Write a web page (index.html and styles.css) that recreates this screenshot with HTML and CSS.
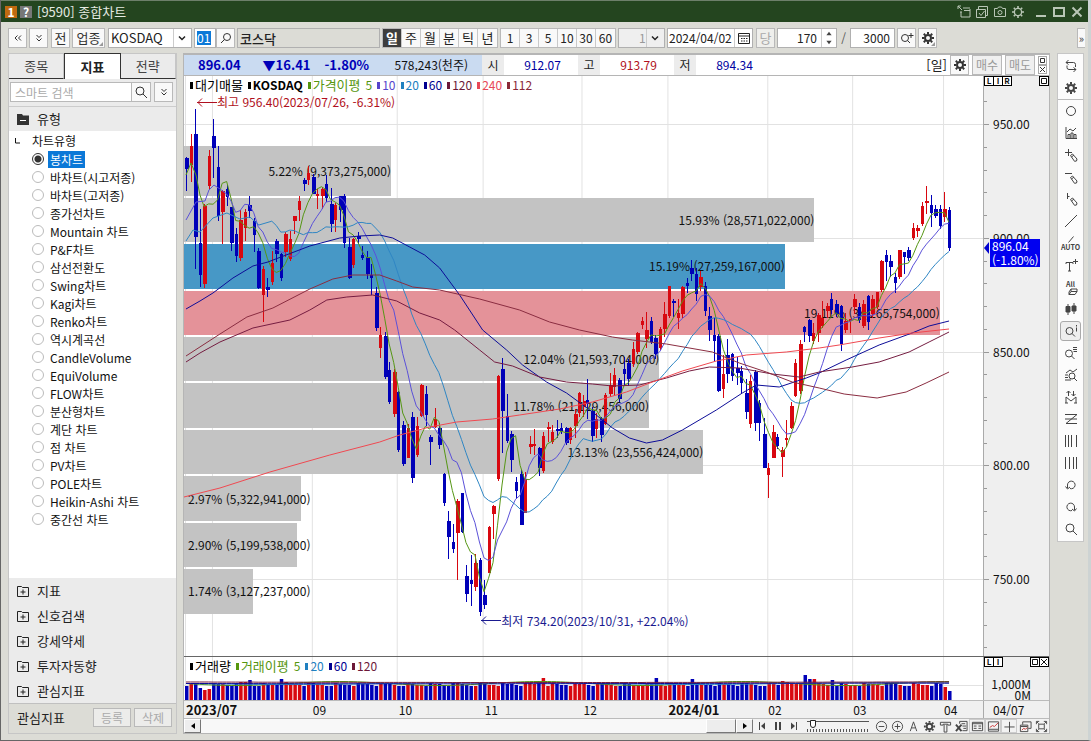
FILE: index.html
```html
<!DOCTYPE html>
<html lang="ko">
<head>
<meta charset="utf-8">
<title>[9590] 종합차트</title>
<link rel="stylesheet" href="styles.css">
</head>
<body>
<svg class="defs" aria-hidden="true">
  <symbol id="gear" viewBox="0 0 14 14"><circle cx="7" cy="7" r="3" fill="none" stroke="currentColor" stroke-width="2"/><path d="M7 1v2M7 11v2M1 7h2M11 7h2M2.8 2.8l1.4 1.4M9.8 9.8l1.4 1.4M11.2 2.8L9.8 4.2M4.2 9.8l-1.4 1.4" stroke="currentColor" stroke-width="2"/></symbol>
  <symbol id="gear-thin" viewBox="0 0 14 14"><circle cx="7" cy="7" r="3.6" fill="none" stroke="currentColor" stroke-width="1.3"/><path d="M7 1v2M7 11v2M1 7h2M11 7h2M2.8 2.8l1.4 1.4M9.8 9.8l1.4 1.4M11.2 2.8L9.8 4.2M4.2 9.8l-1.4 1.4" stroke="currentColor" stroke-width="1.6"/></symbol>
  <symbol id="lens" viewBox="0 0 14 14"><circle cx="6" cy="6" r="4" fill="none" stroke="currentColor"/><path d="M9 9l4 4" stroke="currentColor"/></symbol>
  <symbol id="lens-left" viewBox="0 0 14 14"><circle cx="8" cy="6" r="3.5" fill="none" stroke="currentColor"/><path d="M5.500 8.500L2 12" stroke="currentColor"/></symbol>
  <symbol id="chev" viewBox="0 0 10 10"><path d="M2 3.500l3 3 3-3" fill="none" stroke="currentColor" stroke-width="1.5"/></symbol>
  <symbol id="chev2" viewBox="0 0 10 10"><path d="M2.500 2l2.500 2.500L7.500 2M2.500 5.500L5 8l2.500-2.500" fill="none" stroke="currentColor"/></symbol>
  <symbol id="folder-plus" viewBox="0 0 12 12"><path d="M.5 1.500h4l1 1h6v9H.5zM6 4.500v5M3.500 7h5" fill="none" stroke="currentColor"/></symbol>
  <symbol id="pencil" viewBox="0 0 14 14"><path d="M6.500 7.500l2-1.500 4.500 5-.5 2-2 .3zM7.500 9l2.500-2" fill="none" stroke="currentColor"/></symbol>
</svg>

<div class="window">
<header class="title">
  <span class="badge badge-one">1</span><span class="badge badge-help">?</span>
  <h1>[9590] 종합차트</h1>
  <div class="title-tools">
    <button aria-label="분리"><svg viewBox="0 0 14 14"><path d="M1 1l4 4M1 4V1h3M6 3h7M4 7v5h9V4M4 8V6M7 5.500h6" /></svg></button>
    <button aria-label="복사"><svg viewBox="0 0 14 14"><path d="M1.500 4.500h9v8h-9zM3.500 4V1.500h9v9H11M4 8l2 2.500L9.500 6"/></svg></button>
    <button aria-label="캡처"><svg viewBox="0 0 14 14"><path d="M1.500 3.500h3l1-1.500h3l1 1.500h3v8h-11z"/><circle cx="7" cy="7.500" r="2"/></svg></button>
    <button aria-label="설정"><svg viewBox="0 0 14 14"><use href="#gear-thin"/></svg></button>
    <button class="first-win" aria-label="최소화"><svg viewBox="0 0 14 14"><path class="thick" d="M2 11h10"/></svg></button>
    <button aria-label="최대화"><svg viewBox="0 0 14 14"><path class="thick" d="M2 3h10v8H2z"/></svg></button>
    <button aria-label="닫기"><svg viewBox="0 0 14 14"><path class="thick" d="M2.500 2.500l9 9M11.500 2.500l-9 9"/></svg></button>
  </div>
</header>

<div class="toolbar">
  <button class="btn" aria-label="접기"><svg class="i10" viewBox="0 0 10 10"><path d="M4.500 2.500L2 5l2.500 2.500M8 2.500L5.500 5 8 7.500" fill="none" stroke="currentColor"/></svg></button>
  <button class="btn" aria-label="펼치기"><svg class="i10"><use href="#chev2"/></svg></button>
  <button class="btn lead">전</button>
  <button class="btn wide corner">업종</button>
  <span class="pick market"><select aria-label="시장"><option>KOSDAQ</option></select><svg class="i10"><use href="#chev"/></svg></span>
  <span class="code"><input aria-label="종목코드" value="01"></span>
  <button class="btn join" aria-label="종목검색"><svg class="i14"><use href="#lens-left"/></svg></button>
  <input class="field name" aria-label="종목명" value="코스닥" readonly>
  <div class="group" role="group" aria-label="주기">
    <button class="on">일</button><button>주</button><button>월</button><button>분</button><button>틱</button><button>년</button>
  </div>
  <div class="group nums" role="group" aria-label="간격">
    <button>1</button><button>3</button><button>5</button><button>10</button><button>30</button><button>60</button>
  </div>
  <span class="pick step"><select aria-label="분 간격" disabled><option>1</option></select><svg class="i10"><use href="#chev"/></svg></span>
  <span class="date"><input aria-label="조회일" value="2024/04/02"><button aria-label="달력"><svg class="i14" viewBox="0 0 14 14"><path d="M1.500 2.500h11v10h-11zM2 5h10" fill="none" stroke="currentColor"/><path d="M4 7.500h7M4 10h7" stroke="currentColor" stroke-dasharray="1.500 1"/></svg></button></span>
  <button class="btn dim">당</button>
  <span class="spin"><input aria-label="표시 개수" value="170"><span class="spin-btns"><button aria-label="증가"><svg viewBox="0 0 8 8"><path d="M1 6l3-4 3 4z"/></svg></button><button aria-label="감소"><svg viewBox="0 0 8 8"><path d="M1 2l3 4 3-4z"/></svg></button></span></span>
  <span class="slash">/</span>
  <span class="spin"><input aria-label="전체 개수" value="3000"></span>
  <button class="btn" aria-label="조회 추가"><svg class="i14" viewBox="0 0 14 14"><circle cx="5" cy="7" r="3.500" fill="none" stroke="currentColor"/><path d="M7.500 9.500L10 12M11 2v5M8.500 4.500h5" stroke="currentColor"/></svg></button>
  <button class="btn corner" aria-label="설정"><svg class="i14"><use href="#gear"/></svg></button>
  <button class="btn more" aria-label="더보기">»</button>
</div>

<div class="body">
<aside class="side">
  <div class="tabs" role="tablist"><button role="tab">종목</button><button role="tab" class="active" aria-selected="true">지표</button><button role="tab">전략</button></div>
  <div class="search"><input placeholder="스마트 검색" aria-label="스마트 검색"><button class="btn join" aria-label="검색"><svg class="i14"><use href="#lens"/></svg></button><button class="btn" aria-label="펼치기"><svg class="i10"><use href="#chev2"/></svg></button></div>
  <h2 class="section"><svg class="i12" viewBox="0 0 12 12"><path d="M0 1h5l1 1.500h6V12H0z" fill="#333"/><path d="M3 7.500h6" stroke="#fff"/></svg>유형</h2>
  <fieldset class="tree">
    <legend><svg class="i10" viewBox="0 0 10 10"><path d="M2.500 2v5H7" fill="none" stroke="currentColor"/></svg>차트유형</legend>
    <label><input type="radio" name="t" checked><span>봉차트</span></label>
    <label><input type="radio" name="t"><span>바차트(시고저종)</span></label>
    <label><input type="radio" name="t"><span>바차트(고저종)</span></label>
    <label><input type="radio" name="t"><span>종가선차트</span></label>
    <label><input type="radio" name="t"><span>Mountain 차트</span></label>
    <label><input type="radio" name="t"><span>P&amp;F차트</span></label>
    <label><input type="radio" name="t"><span>삼선전환도</span></label>
    <label><input type="radio" name="t"><span>Swing차트</span></label>
    <label><input type="radio" name="t"><span>Kagi차트</span></label>
    <label><input type="radio" name="t"><span>Renko차트</span></label>
    <label><input type="radio" name="t"><span>역시계곡선</span></label>
    <label><input type="radio" name="t"><span>CandleVolume</span></label>
    <label><input type="radio" name="t"><span>EquiVolume</span></label>
    <label><input type="radio" name="t"><span>FLOW차트</span></label>
    <label><input type="radio" name="t"><span>분산형차트</span></label>
    <label><input type="radio" name="t"><span>계단 차트</span></label>
    <label><input type="radio" name="t"><span>점 차트</span></label>
    <label><input type="radio" name="t"><span>PV차트</span></label>
    <label><input type="radio" name="t"><span>POLE차트</span></label>
    <label><input type="radio" name="t"><span>Heikin-Ashi 차트</span></label>
    <label><input type="radio" name="t"><span>중간선 차트</span></label>
  </fieldset>
  <div class="folders">
    <button><svg class="i12"><use href="#folder-plus"/></svg>지표</button>
    <button><svg class="i12"><use href="#folder-plus"/></svg>신호검색</button>
    <button><svg class="i12"><use href="#folder-plus"/></svg>강세약세</button>
    <button><svg class="i12"><use href="#folder-plus"/></svg>투자자동향</button>
    <button><svg class="i12"><use href="#folder-plus"/></svg>관심지표</button>
  </div>
  <div class="side-foot"><span>관심지표</span><button disabled>등록</button><button disabled>삭제</button></div>
</aside>

<main class="chart">
  <div class="quote">
    <div class="now"><b>896.04</b><b class="chg">▼16.41</b><b class="rate">-1.80%</b><span>578,243(천주)</span></div>
    <span class="k">시</span><span class="v">912.07</span>
    <span class="k">고</span><span class="v up">913.79</span>
    <span class="k">저</span><span class="v">894.34</span>
    <span class="unit">[일]</span>
    <button class="btn" aria-label="설정"><svg class="i14"><use href="#gear"/></svg></button>
    <button class="btn trade">매수</button>
    <button class="btn trade">매도</button>
    <span class="mini"><button aria-label="확대"><svg viewBox="0 0 9 9"><path d="M2.500 2.500h4v4h-4z"/></svg></button><button aria-label="닫기"><svg viewBox="0 0 9 9"><path d="M2 2l5 5M7 2L2 7"/></svg></button></span>
  </div>

  <section class="pane price">
    <div class="plot">
      <svg id="grid" class="layer" viewBox="184 76 800 580" preserveAspectRatio="none"></svg>
      <div class="profile">
        <div class="bar" style="width:25.900%">5.22% (9,373,275,000)</div>
        <div class="bar" style="width:78.900%">15.93% (28,571,022,000)</div>
        <div class="bar blue" style="width:75.200%">15.19% (27,259,167,000)</div>
        <div class="bar pink" style="width:94.600%">19.11% (34,265,754,000)</div>
        <div class="bar" style="width:59.500%">12.04% (21,593,704,000)</div>
        <div class="bar" style="width:58.200%">11.78% (21,129,456,000)</div>
        <div class="bar" style="width:65%">13.13% (23,556,424,000)</div>
        <div class="bar short" style="width:14.600%">2.97% (5,322,941,000)</div>
        <div class="bar short" style="width:14.200%">2.90% (5,199,538,000)</div>
        <div class="bar short" style="width:8.600%">1.74% (3,127,237,000)</div>
      </div>
      <svg id="series" class="layer crisp" viewBox="184 76 800 580" preserveAspectRatio="none"></svg>
      <div class="legend">
        <span class="ko c-black">대기매물</span><b class="c-black">KOSDAQ</b><span class="ko c-green">가격이평</span><span class="c-green bare">5</span><span class="c-violet">10</span><span class="c-sky">20</span><span class="c-navy">60</span><span class="c-wine">120</span><span class="c-red">240</span><span class="c-brown">112</span>
      </div>
      <p class="note high"><svg viewBox="0 0 20 9"><path d="M0 4.500h20M5 .5l-4 4 4 4"/></svg>최고 956.40(2023/07/26, -6.31%)</p>
      <p class="note low"><svg viewBox="0 0 20 9"><path d="M0 4.500h20M5 .5l-4 4 4 4"/></svg>최저 734.20(2023/10/31, +22.04%)</p>
    </div>
    <div class="axis">
      <svg id="ticks" class="ticks" viewBox="0 76 6 580" preserveAspectRatio="none"></svg>
      <div class="scale"><span>950.00</span><span>900.00</span><span>850.00</span><span>800.00</span><span>750.00</span></div>
      <div class="tag">896.04<br>(-1.80%)</div>
      <div class="lir"><button>L</button><button>I</button><button>R</button><button class="end" aria-label="확대"><svg viewBox="0 0 8 8"><path d="M1.500 1.500h5v5h-5z"/></svg></button></div>
    </div>
  </section>

  <section class="pane volume">
    <div class="plot">
      <svg id="vol" class="layer" viewBox="184 657 800 43" preserveAspectRatio="none"></svg>
      <div class="legend">
        <span class="ko c-black">거래량</span><span class="ko c-green">거래이평</span><span class="c-green bare">5</span><span class="c-sky">20</span><span class="c-navy">60</span><span class="c-wine">120</span>
      </div>
    </div>
    <div class="axis">
      <div class="lir"><button>L</button><button>I</button><button class="end" aria-label="확대"><svg viewBox="0 0 8 8"><path d="M1.500 1.500h5v5h-5z"/></svg></button><button aria-label="닫기"><svg viewBox="0 0 8 8"><path d="M1 1l6 6M7 1L1 7"/></svg></button></div>
      <div class="vscale"><span>1,000M</span><span>0M</span></div>
    </div>
  </section>

  <div class="dates">
    <div class="months"><b>2023/07</b><span>09</span><span>10</span><span>11</span><span>12</span><b>2024/01</b><span>02</span><span>03</span><span>04</span></div>
    <span class="last">04/07</span>
  </div>

  <div class="controls">
    <button class="sb" aria-label="왼쪽"><svg viewBox="0 0 8 8"><path d="M6 1L2 4l4 3z"/></svg></button>
    <div class="track"><div class="thumb"></div></div>
    <button class="sb" aria-label="오른쪽"><svg viewBox="0 0 8 8"><path d="M2 1l4 3-4 3z"/></svg></button>
    <div class="play">
      <button aria-label="처음"><svg viewBox="0 0 10 10"><path d="M2.500 1v8" stroke="#444"/><path d="M8 1.500v7L4 5z" fill="#444"/></svg></button>
      <button aria-label="일시정지"><svg viewBox="0 0 10 10"><path d="M3 1v8M7 1v8" stroke="#444" stroke-width="2"/></svg></button>
      <button aria-label="끝"><svg viewBox="0 0 10 10"><path d="M7.500 1v8" stroke="#444"/><path d="M2 1.500v7L6 5z" fill="#444"/></svg></button>
    </div>
    <input class="speed" type="range" aria-label="속도" min="0" max="20" value="1">
    <div class="tools">
      <button aria-label="축소"><svg viewBox="0 0 14 14"><circle cx="7" cy="7" r="5.500"/><path d="M4 7h6"/></svg></button>
      <button aria-label="확대"><svg viewBox="0 0 14 14"><circle cx="7" cy="7" r="5.500"/><path d="M4 7h6M7 4v6"/></svg></button>
      <button aria-label="글자"><svg viewBox="0 0 14 14"><path d="M3.500 12L7 2l3.500 10M5 8.500h4"/></svg></button>
      <button aria-label="설정"><svg viewBox="0 0 14 14"><use href="#gear"/></svg></button>
      <button aria-label="도구"><svg viewBox="0 0 14 14"><path d="M1.500 5.500v-3h11v3h-3v-1h-5v1zM5.500 5v8h3V5"/></svg></button>
      <button aria-label="엑셀"><svg viewBox="0 0 14 14"><path d="M5 4V1.500h8v10H8M7 4h4M8 6.500h4M9 9h3"/><path class="thick" d="M1 5l6 7M7 5l-6 7"/></svg></button>
      <button class="boxed" aria-label="표"><svg viewBox="0 0 14 14"><path d="M1.500 2.500h11v9h-11zM1.500 4h11M3 6.500h3M3 9h3M8 6.500h3M8 9h3"/></svg></button>
      <button class="boxed" aria-label="차트"><svg viewBox="0 0 14 14"><path d="M1.500 2v10h11V2zM2 10h10"/><path d="M3 8l3-2 2 1 4-4" stroke="#c33"/></svg></button>
      <button class="boxed" aria-label="십자선"><svg viewBox="0 0 14 14"><path d="M7 2v11M1.500 7.500h11"/></svg></button>
      <button aria-label="겹치기"><svg viewBox="0 0 14 14"><path d="M1.500 5.500h8v7h-8zM4 5V2h9v7h-3M2 7h7"/><path d="M3 11l2-2 2 1 2-2" stroke="#c33"/></svg></button>
      <button aria-label="전체"><svg viewBox="0 0 14 14"><path d="M1.500 4.500v-3h3M9.500 1.500h3v3M12.500 9.500v3h-3M4.500 12.500h-3v-3M4 4.500h6v5H4zM2 2l2 2M12 2l-2 2M2 12l2-2M12 12l-2-2"/></svg></button>
    </div>
  </div>
</main>

<nav class="rail" aria-label="그리기 도구">
  <button aria-label="새로고침"><svg viewBox="0 0 14 14"><path d="M4.500 1L2 3.500l2.500 2M2 3.500h7.500a2 2 0 0 1 2 2V8M9.500 13l2.500-2.500L9.500 8.500M12 10.500H5a2 2 0 0 1-2-2V6.500"/></svg></button>
  <button aria-label="설정"><svg viewBox="0 0 14 14"><use href="#gear"/></svg></button>
  <hr>
  <button aria-label="원"><svg viewBox="0 0 14 14"><circle cx="7" cy="7" r="4.500"/></svg></button>
  <button aria-label="차트"><svg viewBox="0 0 14 14"><path d="M2 1v11.500h11M4 12V8.500h2V12M7 12V7h2v5M10 12V8.500h2V12M3 6l3-3 3 2 3-3"/></svg></button>
  <button aria-label="추가"><svg viewBox="0 0 14 14"><path d="M4.500 1v7M1 4.500h7"/><use href="#pencil"/></svg></button>
  <button aria-label="수평선"><svg viewBox="0 0 14 14"><path d="M1 3.500h7"/><use href="#pencil"/></svg></button>
  <button aria-label="수직선"><svg viewBox="0 0 14 14"><path d="M3.500 1v6M3.500 4.500h2"/><use href="#pencil"/></svg></button>
  <button aria-label="추세선"><svg viewBox="0 0 14 14"><path d="M1 13L13 1"/></svg></button>
  <button class="txt"><svg viewBox="0 0 14 7"><path d="M4.500 6.500l5-6"/></svg>AUTO</button>
  <button aria-label="글자"><svg viewBox="0 0 14 14"><path d="M2 6V4.500h7V6M5.500 4.500V13M4 13h3M11.500 1v5M9 3.500h5"/></svg></button>
  <button class="txt all">All<svg viewBox="0 0 14 7"><path d="M5 6.500l2-3h6l-2 3zM7 3.500V1l6 0v2.500M5 6.500V4l2-3"/></svg></button>
  <button aria-label="봉"><svg viewBox="0 0 14 14"><path d="M4 2v11M10 1v11"/><path d="M2 4.500h4V10H2zM8 4h4v5H8z" fill="#444"/></svg></button>
  <button class="sel" aria-label="정보"><svg viewBox="0 0 14 14"><circle cx="5.500" cy="7" r="3.500"/><path d="M8 9.500l3 3M12.500 3.500v4M12.500 1v1.500"/></svg></button>
  <button aria-label="목록"><svg viewBox="0 0 14 14"><circle cx="5" cy="7.500" r="3.500"/><path d="M7.500 10l3 3M9 1.500h4M9 3.500h4M9.500 5.500H13"/></svg></button>
  <button aria-label="분석"><svg viewBox="0 0 14 14"><circle cx="8" cy="8" r="3"/><path d="M10 10l3 3M2 5l4-3 3 2 4-3M1 7h3M1 9.500h3M1 12h6"/></svg></button>
  <button aria-label="패턴"><svg viewBox="0 0 14 14"><path d="M2 13V7l5 4 5-4v6M4.500 1v5M2.500 3l2-2 2 2M9.500 1v5M7.500 4l2 2 2-2M1 13h3M10 13h3"/></svg></button>
  <button aria-label="지그재그"><svg viewBox="0 0 14 14"><path d="M1 2.500h12L2 11.500h11M1 7h12"/></svg></button>
  <button aria-label="세로선"><svg viewBox="0 0 14 14"><path d="M1.500 1v12M4.500 1v12M7.500 1v12M12.500 1v12"/></svg></button>
  <button aria-label="등간격"><svg viewBox="0 0 14 14"><path d="M1.500 1v12M5.500 1v12M9.500 1v12M12.500 1v12"/></svg></button>
  <button aria-label="되돌리기"><svg viewBox="0 0 14 14"><path d="M6 10.500A3.800 3.800 0 1 0 3.500 7v3M1.500 8.500l2 2.500 2.500-2"/></svg></button>
  <button aria-label="다시하기"><svg viewBox="0 0 14 14"><path d="M8 10.500A3.800 3.800 0 1 1 10.500 7v3M12.500 8.500l-2 2.500-2.500-2"/></svg></button>
  <button aria-label="돋보기"><svg viewBox="0 0 14 14"><use href="#lens"/></svg></button>
</nav>
</div>
</div>
<script src="chart.js"></script>
</body>
</html>
```

FILE: styles.css
```css
* { box-sizing: border-box; }
body {
  margin: 0;
  font-family: "Noto Sans CJK KR", sans-serif;
  font-size: 12px;
  line-height: 18px;
  color: #222;
  background: #dcdcd6;
}
button, input, select { font: inherit; color: inherit; margin: 0; padding: 0; border: 0; background: none; border-radius: 0; }
button { display: flex; align-items: center; justify-content: center; white-space: nowrap; }
h1, h2, p { margin: 0; font-weight: 400; }
.defs { display: none; }
.i10 { width: 10px; height: 10px; }
.i12 { width: 12px; height: 12px; }
.i14 { width: 14px; height: 14px; }

.window {
  display: flex;
  flex-direction: column;
  height: 100vh;
  min-height: 700px;
  border-left: 1px solid #666;
  border-bottom: 1px solid #666;
  border-right: 3px solid #cdd3d3;
}
.title {
  display: flex;
  align-items: center;
  gap: 3px;
  height: 22px;
  padding: 0 4px;
  background: #24451f;
  border-top: 1px solid #6d7f6a;
  color: #e4eae2;
}
.title h1 { font-size: 13px; padding-left: 2px; }
.badge { width: 12px; height: 12px; line-height: 12px; text-align: center; font-weight: 700; color: #fff; }
.badge-one { background: #c06a10; }
.badge-help { background: #777; }
.title-tools { display: flex; gap: 4px; margin-left: auto; }
.title-tools svg { width: 14px; height: 14px; fill: none; stroke: #b9c6b6; color: #b9c6b6; }
.title-tools .first-win { margin-left: 5px; }
.thick { stroke-width: 2; }

.toolbar { display: flex; align-items: center; padding: 6px 3px 5px 7px; gap: 2px; }
.toolbar > * { flex: none; }
.btn {
  position: relative;
  width: 19px;
  height: 20px;
  background: #f9f9f9;
  border: 1px solid #b9b9b9;
  color: #333;
}
.toolbar .btn { font-size: 13px; }
.btn.wide { width: 33px; }
.btn.lead { margin-left: 1px; }
.btn.dim { color: #aaa; background: #efefec; margin-left: 1px; }
.corner::after {
  content: "";
  position: absolute;
  right: 1px;
  bottom: 1px;
  border: 2px solid;
  border-color: transparent #999 #999 transparent;
}
.pick { position: relative; display: flex; height: 20px; border: 1px solid #b0b0b0; background: #fff; }
.pick select { appearance: none; width: 100%; padding: 0 2px; }
.pick svg { position: absolute; right: 4px; top: 4px; }
.pick::after { content: ""; position: absolute; right: 17px; top: 0; bottom: 0; border-left: 1px solid #ccc; }
.market { width: 84px; margin-left: 1px; }
.market select { font-size: 13px; }
.step { width: 47px; }
.step select { color: #999; background: #efefef; opacity: 1; padding-left: 20px; }
.code { display: flex; align-items: center; width: 22px; height: 20px; padding: 0 2px; border: 1px solid #b0b0b0; background: #fff; }
.code input { width: 14px; height: 14px; background: #0b78d7; color: #fff; }
.btn.join { margin-left: -2px; }
.field { height: 20px; border: 1px solid #b0b0b0; background: #fff; padding: 0 4px; }
.name { width: 143px; background: #dcdcd6; font-weight: 500; font-size: 13px; padding: 0 2px; }
.group { display: flex; height: 20px; border: 1px solid #b9b9b9; background: #f9f9f9; }
.group button { width: 19px; border-right: 1px solid #c9c9c9; font-size: 13px; }
.group.nums button { font-size: 12px; }
.group button:last-child { border-right: 0; }
.group .on { background: #3d3d3d; color: #fff; font-weight: 700; }
.date { display: flex; height: 20px; border: 1px solid #b0b0b0; background: #fff; }
.date input { width: 66px; padding-left: 1px; }
.date button { width: 18px; border-left: 1px solid #ccc; }
.spin { display: flex; height: 20px; border: 1px solid #b0b0b0; background: #fff; }
.spin input { width: 43px; text-align: right; padding-right: 4px; }
.spin-btns { width: 15px; border-left: 1px solid #ccc; }
.spin-btns button { width: 14px; height: 9px; }
.spin-btns svg { width: 8px; height: 7px; fill: #444; }
.slash { width: 9px; text-align: center; color: #555; }
.toolbar .more { margin-left: auto; width: 8px; font-size: 11px; border-right: 0; }

.body { flex: 1; display: flex; min-height: 0; padding: 0 3px 6px 7px; align-items: flex-start; }

.side { display: flex; flex-direction: column; width: 169px; height: 100%; background: #ebebeb; border: 1px solid #c6c6c6; border-top: 0; }
.tabs { display: flex; height: 26px; background: #dcdcd6; }
.tabs button { flex: 1; font-size: 13px; color: #444; background: #ebebeb; border: 1px solid #c6c6c6; border-left: 0; border-bottom: 1px solid #333; }
.tabs .active { background: #fff; color: #222; font-weight: 700; border: 1px solid #333; border-bottom: 0; }
.search { display: flex; padding: 3px 3px 4px 1px; }
.search input { flex: 1; min-width: 0; height: 20px; background: #fff; border: 1px solid #b9b9b9; padding: 0 4px; }
.search input::placeholder { color: #aaa; opacity: 1; }
.search .btn.join { width: 20px; margin: 0 3px 0 -1px; }
.section { display: flex; align-items: center; gap: 8px; height: 25px; padding: 0 8px; border-top: 1px solid #ccc; font-size: 13px; }
.tree { flex: 1; margin: 0; padding: 1px 0 0; border: 0; background: #fff; min-width: 0; font-size: 12px; overflow: hidden; }
.tree legend { float: left; width: 100%; display: flex; align-items: center; gap: 9px; height: 18px; padding: 0 4px; color: #111; }
.tree label { display: flex; align-items: center; clear: both; height: 18px; padding-left: 23px; gap: 4px; color: #111; white-space: nowrap; }
.tree span { padding: 0 2px; line-height: 17px; }
.tree input { appearance: none; width: 12px; height: 12px; border: 1px solid #bbb; border-radius: 50%; background: #fff; }
.tree input:checked { border-color: #333; background: radial-gradient(circle, #333 0 3px, #fff 4px); }
.tree input:checked + span { background: #0b78d7; color: #fff; }
.folders button { width: 100%; height: 25px; padding: 0 8px; gap: 8px; justify-content: flex-start; font-size: 13px; color: #222; }
.side-foot { display: flex; align-items: center; height: 30px; padding: 0 4px 2px 8px; gap: 3px; background: #dcdcd6; border-top: 1px solid #c0c0c0; }
.side-foot span { flex: 1; font-size: 13px; }
.side-foot button { width: 38px; height: 19px; border: 1px solid #b9b9b9; background: #ececea; color: #aaa; }

.chart { flex: 1; min-width: 0; height: 100%; display: flex; flex-direction: column; margin-left: 6px; border: 1px solid #b5b5b5; border-top: 2px solid #b5b5b5; background: #fff; }
.quote { display: flex; align-items: center; height: 21px; padding-right: 2px; gap: 3px; border-bottom: 1px solid #b5b5b5; }
.now { display: flex; align-items: center; width: 298px; height: 20px; padding: 0 14px; background: #cadbf1; color: #111; }
.now b { font-size: 13px; color: #0000b8; }
.now .chg { margin-left: 22px; }
.now .rate { margin-left: 14px; }
.now span { margin-left: auto; }
.k { width: 22px; height: 20px; margin-left: -3px; background: #ececec; text-align: center; line-height: 20px; }
.v { width: 71px; text-align: center; color: #0000a0; }
.v.up { color: #b01020; }
.unit { margin-left: auto; font-size: 13px; }
.quote .trade { width: 30px; color: #999; background: #f0f0f0; }
.mini { display: grid; }
.mini button, .lir button { width: 9px; height: 9px; border: 1px solid #aaa; background: #fff; }
.mini svg { width: 9px; height: 9px; flex: none; fill: none; stroke: #333; }

.pane { display: flex; min-height: 0; }
.price { flex: 1; }
.plot { position: relative; flex: 1; min-width: 0; overflow: hidden; }
.layer { position: absolute; inset: 0; width: 100%; height: 100%; }
.crisp { shape-rendering: crispEdges; }
.axis { position: relative; width: 66px; background: #efefef; border-left: 1px solid #aaa; color: #111; }
.profile { position: absolute; inset: 12.100% 0 7.300%; display: grid; grid-template-rows: 49fr; grid-auto-rows: 44fr; gap: 2px; }
.bar { display: flex; align-items: center; justify-content: flex-end; white-space: nowrap; background: #c3c3c3; color: #111; }
.bar.short { justify-content: flex-start; padding-left: 4px; }
.bar.blue { background: #4798c6; }
.bar.pink { background: #e49299; }
.legend { position: absolute; top: 0; left: 6px; display: flex; gap: 5px; }
.legend > * { display: flex; align-items: center; gap: 2px; }
.legend > *::before { content: ""; width: 3px; height: 7px; background: currentColor; }
.legend .ko { font-size: 13px; }
.legend .bare::before { display: none; }
.c-black { color: #000; }
.c-green { color: #55960e; }
.c-violet { color: #5545cc; }
.c-sky { color: #2080c0; }
.c-navy { color: #000090; }
.c-wine { color: #6c1838; }
.c-red { color: #e84858; }
.c-brown { color: #8a2838; }
.note { position: absolute; display: flex; align-items: center; white-space: nowrap; }
.note svg { width: 20px; height: 9px; fill: none; stroke: currentColor; }
.high { left: 13px; top: 17px; color: #b01020; }
.low { left: 37.200%; top: 92.400%; color: #1a1a90; }
.ticks { position: absolute; left: 0; top: 0; width: 6px; height: 100%; }
.scale { display: grid; height: 100%; padding-left: 9px; grid-template-rows: 48fr 114fr 114fr 113fr 114fr 77fr; }
.scale span { align-self: end; margin-bottom: -9px; }
.tag { position: absolute; left: 6px; top: 28.100%; width: 50px; height: 28px; padding-left: 2px; line-height: 14px; background: #0000f0; color: #fff; }
.tag::before { content: ""; position: absolute; right: 100%; top: 3px; margin-right: 1px; border: 6px solid transparent; border-right: 5px solid #0000d0; border-left: 0; }
.lir { position: absolute; inset: 0 0 auto 0; display: flex; }
.lir button { height: 10px; width: 10px; border-color: #000; font-size: 8px; line-height: 8px; font-weight: 700; margin-right: -1px; }
.lir svg { width: 8px; height: 8px; flex: none; fill: none; stroke: #111; }
.lir .end { margin-left: auto; }
.lir button:last-child { margin-right: 0; }
.volume { height: 44px; border-top: 1px solid #666; }
.volume .lir .end { margin-right: -1px; }
.vscale { display: flex; flex-direction: column; align-items: flex-end; padding: 21px 18px 0 0; line-height: 11px; }
.dates { display: flex; height: 18px; background: #f0f0f0; border-top: 1px solid #bbb; color: #111; }
.months { flex: 1; display: grid; padding-left: 2px; grid-template-columns: 127fr 86fr 86fr 99fr 85fr 100fr 85fr 91fr 39fr; line-height: 17px; }
.months > * { min-width: 0; }
.months b { font-size: 13px; }
.last { width: 66px; padding-left: 9px; border-left: 1px solid #aaa; line-height: 17px; }

.controls { display: flex; align-items: center; height: 15px; background: #f2f2f2; border-top: 1px solid #bbb; }
.sb { width: 17px; height: 14px; border: 1px solid #fff; border-right-color: #777; border-bottom-color: #777; background: #eee; }
.sb svg { width: 8px; height: 8px; }
.track { flex: 1; display: flex; justify-content: flex-end; height: 14px; background: #f8f8f8; }
.thumb { width: 30px; height: 14px; background: #ededed; border: 1px solid #fff; border-right-color: #777; border-bottom-color: #777; }
.play { display: flex; gap: 6px; margin-left: 4px; }
.play svg { width: 10px; height: 10px; }
.speed { appearance: none; width: 62px; height: 14px; margin: 0 4px 0 8px; background: linear-gradient(#555, #555) 0 2px / 100% 1px no-repeat, repeating-linear-gradient(90deg, #555 0 1px, transparent 1px 3px) 0 10px / 100% 3px no-repeat; }
.speed::-webkit-slider-thumb { appearance: none; width: 6px; height: 8px; margin-bottom: 4px; border: 1px solid #222; border-radius: 0 0 3px 3px; background: #fff; }
.tools { display: flex; }
.tools button { width: 16px; height: 14px; }
.tools .boxed { box-shadow: inset 0 0 0 1px #ccc; }
.tools svg { width: 13px; height: 13px; flex: none; fill: none; stroke: #444; color: #444; }

.rail { display: flex; flex-direction: column; width: 27px; margin: 0 1px 0 7px; padding: 1px 0; background: #fcfcfc; border: 1px solid #c6c6c6; }
.rail button { height: 22px; color: #444; }
.rail hr { width: 100%; margin: 0; border: 0; border-top: 1px solid #bbb; }
.rail svg { width: 14px; height: 14px; flex: none; fill: none; stroke: #444; }
.rail .txt { flex-direction: column; font-size: 7px; line-height: 8px; font-weight: 700; }
.rail .txt svg { width: 14px; height: 7px; }
.rail .sel { height: 20px; margin: 1px 2px; background: #eee; border: 1px solid #aaa; border-radius: 3px; }
```

FILE: chart.js
```js
// Candles: [direction, high, body top, body bottom, low], in thirds of a unit,
// grouped under the offset of the group's vertical origin.
const groups = [
  [95, `b185 188 222 287|r117 153 210 262|b42 117 425 523|b342 444 540 575|r328 332 567 580|r165 183 272 285|b72 123 158 250|b153 215 362 378|r285 289 352 447|b270 282 305 332|b335 336 443 467|b400 417 483 502|r345 374 490 497|r341 351 398 437|b303 330 347 368|b370 378 420 470|b460 467 578 582|r513 521 600 680|b548 576 584 605|r467 504 560 570|b433 437 476 502|b475 478 548 558|r410 417 472 487|r407 433 491 498|r362 363 377 416|r302 318 346 377|b248 255 266 288|r212 234 256 270|b238 246 296 298|r282 297 304 342|r275 282 302 341|b241 267 308 320|b280 327 386 410|r325 330 374 410|b303 303 346 380|b298 303 443 458|b428 456 548 552|r430 432 510 520|b410 423 432 448|b452 480 488 496|b467 487 537 552|b507 540 548 600|b575 595 698 708|r697 720 758 788`],
  [330, `b5 18 140 148|b95 121 217 222|r118 126 252 262|b183 187 360 367|b273 286 402 408|r283 294 383 385|b247 262 443 458|r260 288 375 380|r162 165 257 260|b168 192 256 288|b315 321 335 405|r234 268 290 294|b280 293 346 356|b430 433 518 527|b543 573 620 686|b582 636 656 668|r508 513 608 750|b488 490 606 610|b704 738 792 816|b675 750 762 827|r673 700 770 783|b683 690 846 857|b750 795 825 837|r588 591 728 730|r525 528 551 626|r136 138 446 453|b84 117 243 370|b192 258 332 338|b302 312 390 426|b440 456 482 508|b420 432 584 585|r425 447 548 550|r318 342 350 372|r297 343 348 376|b350 354 415 438|r305 318 423 428|r275 290 296 335|r286 306 335 342|b270 296 300 325|b280 293 303 312|b290 295 338 345|r290 294 330 342|r238 252 288 325|r185 190 250 260|r195 212 230 262|b148 210 222 268|b230 242 318 335|r250 268 296 325`],
  [240, `b530 538 584 605|r460 465 552 556|r400 436 461 470|r385 405 440 465|b415 420 478 485|b352 388 403 435|b358 368 418 437|r307 327 372 380|r275 278 336 342|r230 244 256 267|r215 270 297 323|b232 242 305 312|b285 294 343 357|r262 267 325 330|r185 223 267 290|r138 139 228 233|b178 182 190 230|r178 220 234 267|r137 142 222 235|b113 128 138 160|b60 84 102 122|b85 101 162 183|r92 110 142 152|b125 138 212 228|b200 228 270 302|b234 284 304 362|b282 288 453 457|r345 402 447 473|b296 344 401 430|b338 342 408 423|b350 385 400 435|b378 394 430 458|b418 460 515 537|r405 422 552 563|b390 396 548 572|b480 490 548 602|b535 582 684 685|r670 684 705 773|r555 576 653 655|b582 591 619 628|r620 630 650 711|r540 594 600 620|r485 497 564 568|r358 370 467 472|r300 312 452 463|b258 262 275 305|b238 240 287 305|r250 280 303 312`],
  [170, `r430 435 490 515|r393 445 467 473|r398 408 422 445|b368 387 420 432|b390 403 432 440|b405 408 522 544|r430 452 480 488|r447 448 452 490|r372 387 412 432|b400 411 450 460|r390 402 467 475|b375 378 456 480|r375 387 432 445|r365 366 410 418|r270 273 360 365|b240 255 276 333|b255 273 290 320|b310 321 340 370|r240 241 322 326|b245 246 262 312|b230 240 264 272|r158 174 203 210|r165 174 184 200|r95 108 162 168|r48 93 97 132|b75 105 128 172|b105 117 137 145|b105 117 168 178|r67 117 140 155|b110 120 234 242`]
];

const UP = '#d80810', DOWN = '#0000b8';
const candles = groups.flatMap(([origin, rows]) => rows.split('|').map(r => ({
  up: r[0] === 'r',
  y: r.slice(1).split(' ').map(v => origin + v / 3)
})));
const step = 764 / (candles.length - 1);
const xAt = i => 186 + i * step;
const fix = n => n.toFixed(1);
const rect = (x, y, w, h, c) => `<rect x="${fix(x)}" y="${fix(y)}" width="${w}" height="${fix(h)}" fill="${c}"/>`;
const line = (pts, c) => `<polyline points="${pts.map(p => p.map(fix).join()).join(' ')}" fill="none" stroke="${c}"/>`;

const months = [185, 212, 312, 397, 483, 582, 668, 768, 853, 944];
const vertical = months.map(x => `<path d="M${x + .5} 0V760"/>`).join('');
document.getElementById('grid').innerHTML =
  `<g stroke="#e2e2e2">${vertical}${[124, 238, 352, 465, 579].map(y => `<path d="M184 ${y + .5}H984"/>`).join('')}</g>`;

let ticks = '';
for (let i = -2; i < 24; i++) {
  const y = Math.round(124 + i * 22.75) + .5;
  ticks += `<path d="M0 ${y}h${i % 5 ? 3 : 5}" stroke="#999"/>`;
}
document.getElementById('ticks').innerHTML = ticks;

const closes = candles.map(c => c.up ? c.y[1] : c.y[2]);
const average = (n, lead) => lead.concat(closes.flatMap((_, i) =>
  i < n - 1 ? [] : [[xAt(i), closes.slice(i - n + 1, i + 1).reduce((a, b) => a + b) / n]]));

const long = (text, c) => line(text.split(' ').map(p => p.split(',').map(Number)), c);
let out = '';
candles.forEach((c, i) => {
  const [hi, top, bottom, lo] = c.y, color = c.up ? UP : DOWN, x = Math.round(xAt(i));
  out += rect(x, hi, 1, lo - hi, color) + rect(x - 1, top, i % 2 ? 3 : 4, Math.max(bottom - top, 2), color);
});
out += line(average(5, [[186, 175], [191, 163], [196, 175], [200, 195]]), '#559614');
out += line(average(10, [[186, 220], [196, 202], [205, 201], [209, 190], [214, 185], [220, 189]]), '#5a50d8');
out += line(average(20, [[186, 241], [193, 230], [200, 232], [213, 218], [227, 213], [240, 219], [250, 217], [259, 225]]), '#2e86c4');
out += long('186,309 200,301 213,293 233,278 253,266 268,262 281,257 310,246 340,238 360,236 380,235 393,238 410,247 425,255 440,268 460,295 483,330 507,350 523,365 547,382 567,393 593,412 613,428 630,438 647,443 663,440 683,430 717,410 743,393 757,385 780,387 807,378 820,373 847,360 880,345 913,333 930,326 950,321', '#0c0c98');
out += long('186,362 200,353 220,342 253,328 290,320 310,310 327,300 347,297 373,295 397,301 420,313 440,320 455,330 480,350 495,362 513,366 540,377 567,382 593,384 613,386 640,385 667,378 690,371 710,367 740,368 773,374 800,377 820,372 853,367 880,362 910,352 930,342 950,332', '#741c40');
out += long('186,356 220,334 247,317 273,308 310,289 333,279 353,275 380,275 397,281 413,287 440,290 480,299 520,310 550,322 580,330 613,337 633,340 667,344 713,352 740,363 767,372 793,382 820,388 845,394 878,398 907,392 927,383 950,372', '#8a2c40');
out += long('184,497 220,488 270,472 330,455 380,442 400,435 430,427 457,422 493,419 520,415 560,409 593,402 627,392 653,382 683,371 717,361 747,355 787,352 820,348 840,345 880,338 913,333 950,329', '#f04850');
document.getElementById('series').innerHTML = out;

// Bar heights above the volume baseline.
const surges = { 12: 18, 13: 18, 14: 20, 21: 21, 22: 18, 78: 19, 79: 22, 104: 22, 112: 21, 132: 19, 133: 18, 137: 25, 138: 21, 139: 21, 143: 20, 4: 10, 3: 12, 5: 11, 169: 9, 168: 13 };
let bars = `<g stroke="#e2e2e2">${vertical}<path d="M184 685.500H984"/></g>`;
candles.forEach((c, i) => {
  const h = surges[i] || 14 + (i * 7 + (i >> 2)) % 4;
  bars += rect(xAt(i) - 1, 700 - h, 3.5, h, c.up ? UP : DOWN);
});
const wave = (y, a, f, c) => line(candles.map((_, i) => [xAt(i), y + a * Math.sin(i * f)]), c);
bars += wave(683.5, 2, .14, '#559614') + wave(683.5, 1, .07, '#2e86c4') + wave(683.5, .3, .03, '#0c0c98') + wave(682, .5, .02, '#741c40');
document.getElementById('vol').innerHTML = bars;
```
